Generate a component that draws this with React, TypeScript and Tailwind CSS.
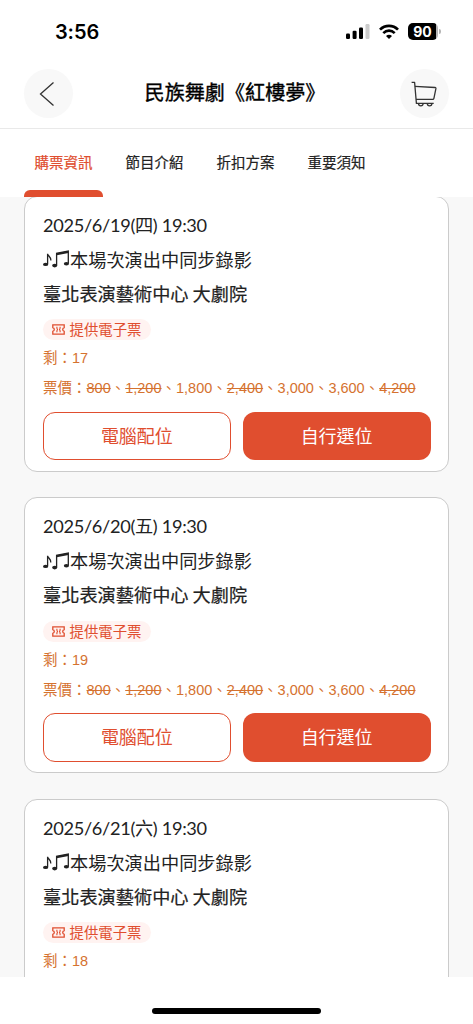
import { clsx } from 'clsx';

interface Price {
  amount: string;
  soldOut?: boolean;
}

interface Session {
  date: string;
  note: string;
  venue: string;
  left: number;
}

const tabs = ['購票資訊', '節目介紹', '折扣方案', '重要須知'];

const prices: Price[] = [
  { amount: '800', soldOut: true },
  { amount: '1,200', soldOut: true },
  { amount: '1,800' },
  { amount: '2,400', soldOut: true },
  { amount: '3,000' },
  { amount: '3,600' },
  { amount: '4,200', soldOut: true },
];

const sessions: Session[] = [
  { date: '2025/6/19(四) 19:30', note: '本場次演出中同步錄影', venue: '臺北表演藝術中心 大劇院', left: 17 },
  { date: '2025/6/20(五) 19:30', note: '本場次演出中同步錄影', venue: '臺北表演藝術中心 大劇院', left: 19 },
  { date: '2025/6/21(六) 19:30', note: '本場次演出中同步錄影', venue: '臺北表演藝術中心 大劇院', left: 18 },
];

function StatusBar() {
  return (
    <div className="flex h-[63px] shrink-0 items-center justify-between pl-[55px] pr-[32px]">
      <span className="font-['Inter',sans-serif] text-[20px] font-semibold leading-none tracking-[-0.1px]">3:56</span>
      <div className="flex items-center">
        <svg width="24" height="17" viewBox="0 0 24 17">
          <rect x="0" y="10.5" width="4" height="5.5" rx="1.2" />
          <rect x="6.6" y="7.8" width="4" height="8.2" rx="1.2" />
          <rect x="13" y="4.5" width="4" height="11.5" rx="1.2" />
          <rect x="19.5" y="1" width="4" height="15" rx="1.2" fill="#cccccc" />
        </svg>
        <svg className="ml-[9px]" width="20" height="16" viewBox="0 0 20 16" fill="none" stroke="#000" strokeWidth="2.7">
          <path d="M1 5.6C6 .6 14 .6 19 5.6" />
          <path d="M4.3 9.1c3.3-3.2 8.1-3.2 11.4 0" />
          <path d="M7 11.9c1.8-1.6 4.2-1.6 6 0l-3 3.2z" fill="#000" stroke="none" />
        </svg>
        <div className="ml-[9px] flex h-[17px] w-[30px] items-center justify-center rounded-[5px] bg-[linear-gradient(to_right,#000_92%,#b5b5b5_92%)] pr-px font-['Inter',sans-serif] text-[14px] font-bold leading-none text-white">
          90
        </div>
        <div className="ml-[1px] h-[5px] w-[2px] rounded-r-full bg-[#b5b5b5]" />
      </div>
    </div>
  );
}

function Header() {
  return (
    <header className="flex h-[66px] shrink-0 items-start justify-between border-b border-[#e9e9e9] px-[24px] pt-[6px]">
      <button className="flex size-[49px] items-center justify-center rounded-full bg-[#f8f8f8]">
        <svg className="mr-[3px]" width="16" height="26" viewBox="0 0 16 26" fill="none" stroke="#333" strokeWidth="1.3">
          <path d="M14.5 1.5 1.5 13l13 11.5" />
        </svg>
      </button>
      <h1 className="pr-[3px] pt-[8px] text-[20.1px] leading-[30px] text-black [-webkit-text-stroke:0.35px_#000]">民族舞劇《紅樓夢》</h1>
      <button className="flex size-[49px] items-center justify-center rounded-full bg-[#f8f8f8]">
        <svg className="mr-[2px]" width="26" height="26" viewBox="0 0 26 26" fill="none" stroke="#333" strokeWidth="1.3" strokeLinejoin="round">
          <path d="M.6 1.3h3l1.8 21.1h17.3" />
          <path d="M3.9 5.3l20.1 1.2q1.1.1.9 1.2l-2 9.6q-.2 1-1.2 1H5" />
          <path d="M7.5 22.6a2.3 2.3 0 0 0 4.6 0M16.3 22.6a2.3 2.3 0 0 0 4.6 0" />
        </svg>
      </button>
    </header>
  );
}

function TabBar() {
  return (
    <nav className="relative z-10 flex h-[67.5px] shrink-0 gap-[12px] bg-white px-[24px]">
      {tabs.map((tab, idx) => (
        <button
          key={tab}
          className={clsx(
            'flex w-[79px] flex-col items-center justify-between pt-[22px] text-[14.5px] leading-[22px] [-webkit-text-stroke:0.2px_currentColor]',
            idx === 0 ? 'text-[#e04e2f]' : 'text-[#222222]',
          )}
        >
          {tab}
          {idx === 0 && <span className="h-[7px] w-full rounded-t-[6px] bg-[#e04e2f]" />}
        </button>
      ))}
    </nav>
  );
}

function TicketIcon() {
  return (
    <svg width="13" height="11" viewBox="0 0 13 11" fill="none" stroke="#e04e2f" strokeWidth="1.3">
      <path d="M.8.9h11.4v2.8q-1.5.3-1.5 1.8t1.5 1.8v2.8H.8V7.300q1.500-.3 1.500-1.800T.8 3.700z" />
      <path d="M4.900 2.800v1.300l.6 1.400-.6 1.400v1.300M8.100 2.800v1.300l-.6 1.400.6 1.400v1.300" strokeWidth="1.100" />
    </svg>
  );
}

function NotesIcon() {
  return (
    <svg width="27" height="18" viewBox="0 0 27 18" fill="none" stroke="#222" strokeWidth="1.3">
      <ellipse cx="2.6" cy="14.4" rx="2.600" ry="1.700" fill="#222" stroke="none" />
      <path d="M4.600 14.200V3.800c.4 2.400 3.800 3.200 3.200 6.700" />
      <path d="M13.600 15.200V3.400L25.300 1v12.400" />
      <path d="M13.600 4.200 25.300 1.900" strokeWidth="2" />
      <ellipse cx="11.700" cy="15.600" rx="2.600" ry="1.800" fill="#222" stroke="none" />
      <ellipse cx="23.400" cy="13.700" rx="2.600" ry="1.800" fill="#222" stroke="none" />
    </svg>
  );
}

function SessionCard({ session }: { session: Session }) {
  return (
    <article className="flex h-[276px] shrink-0 flex-col rounded-[13px] border border-[#cbcbcb] bg-white pl-[18px] pr-[17px] pt-[11px] text-[#222222]">
      <p className="h-[34.5px] font-['Lato','Noto_Sans_CJK_TC',sans-serif] text-[18.2px] leading-[34.5px] tracking-[-0.32px]">{session.date}</p>
      <p className="flex h-[34.5px] items-center text-[18.2px] leading-[34.5px]">
        <NotesIcon />
        <span className="-mt-px">{session.note}</span>
      </p>
      <p className="-mt-px h-[35.5px] text-[18.2px] leading-[34.5px] [-webkit-text-stroke:0.22px_currentColor]">{session.venue}</p>
      <div className="mt-[8px] flex h-[21px] items-center gap-[5px] self-start rounded-full bg-[#fff3f1] pl-[8.5px] pr-[10px] text-[14.4px] leading-[19px] text-[#e04e2f]">
        <TicketIcon />
        <span className="-mt-[2px]">提供電子票</span>
      </div>
      <p className="mt-[3px] h-[30px] font-['Liberation_Sans','Noto_Sans_CJK_TC',sans-serif] text-[14.5px] leading-[30px] text-[#d5722f]">
        剩：{session.left}
      </p>
      <p className="h-[30px] whitespace-nowrap font-['Liberation_Sans','Noto_Sans_CJK_TC',sans-serif] text-[14.5px] leading-[30px] text-[#d5722f]">
        票價：
        {prices.map((price, idx) => (
          <span key={price.amount}>
            {idx > 0 && '、'}
            <span className={clsx(price.soldOut && 'line-through')}>{price.amount}</span>
          </span>
        ))}
      </p>
      <div className="mt-[8.5px] grid grid-cols-2 gap-[12px] text-[18px] leading-[26px]">
        <button className="h-[48.5px] rounded-[12px] border-[1.5px] border-[#e04e2f] pb-[2px] text-[#e04e2f]">電腦配位</button>
        <button className="h-[48.5px] rounded-[12px] bg-[#e04e2f] pb-[2px] text-white">自行選位</button>
      </div>
    </article>
  );
}

export default function App() {
  return (
    <div lang="zh-Hant" className="flex h-[1024px] w-[473px] flex-col overflow-hidden bg-white font-['Noto_Sans_CJK_TC',sans-serif]">
      <StatusBar />
      <Header />
      <TabBar />
      <main className="h-[780px] shrink-0 overflow-hidden bg-[#f8f8f8] pl-[24px] pr-[24.5px]">
        <div className="-mt-px flex flex-col gap-[25.5px]">
          {sessions.map((session) => (
            <SessionCard key={session.date} session={session} />
          ))}
        </div>
      </main>
      <footer className="flex flex-1 justify-center pt-[31px]">
        <div className="h-[6px] w-[169px] rounded-full bg-black" />
      </footer>
    </div>
  );
}
